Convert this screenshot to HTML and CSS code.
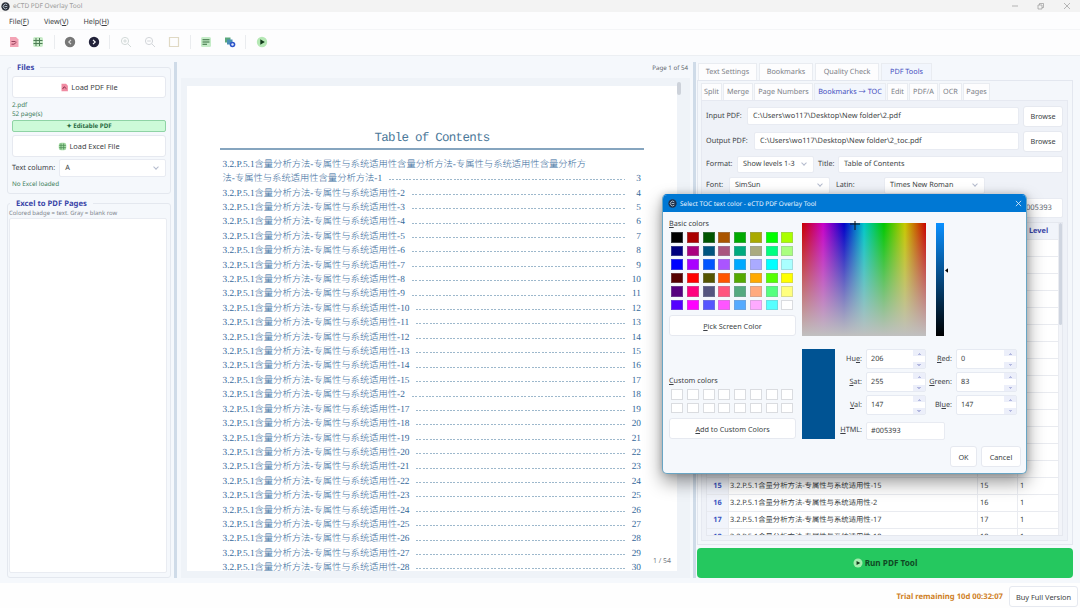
FILE: index.html
```html
<!DOCTYPE html>
<html lang="en">
<head>
    <meta charset="UTF-8">
    <meta name="viewport" content="width=device-width, initial-scale=1.0">
    <title>eCTD PDF Overlay Tool</title>
    <link rel="stylesheet" href="styles.css">
</head>
<body>
    <header class="titlebar">
        <svg class="app-icon" viewBox="0 0 10 10"><circle cx="5" cy="5" r="4.6" fill="#2b2f38"/><path d="M7 3.2A2.6 2.6 0 1 0 7 6.8M4 5h3" fill="none" stroke="#b9c4d0" stroke-width="1"/></svg>
        <span class="app-name">eCTD PDF Overlay Tool</span>
        <svg class="win-buttons" viewBox="0 0 66 12"><path d="M3 6h6M55 3l6 6M61 3l-6 6" stroke="#999" stroke-width=".7"/><path d="M29 5h4v4h-4zM30.500 5V3.500h4v4H33" fill="none" stroke="#999" stroke-width=".7"/></svg>
    </header>
    <nav class="menubar">
        <span>File(<u>F</u>)</span>
        <span>View(<u>V</u>)</span>
        <span>Help(<u>H</u>)</span>
    </nav>
    <div class="toolbar">
        <svg viewBox="0 0 12 12"><path d="M2 1h6l2.500 2.500V11H2z" fill="#f3a3b5"/><path d="M3.500 5.500h4M3.500 8.200h2.500l2.500-2" fill="none" stroke="#8b3450" stroke-width=".9"/></svg>
        <svg viewBox="0 0 12 12"><rect x="1" y="1" width="10" height="10" rx="2" fill="#c9ebc9"/><path d="M4 2v8M7.500 2v8M1.500 4.500h9M1.500 7.500h9" stroke="#4d7d55" stroke-width="1"/></svg>
        <i class="sep"></i>
        <svg viewBox="0 0 12 12"><circle cx="6" cy="6" r="5.200" fill="#777"/><path d="M7 3.800L4.800 6 7 8.200" fill="none" stroke="#ddd" stroke-width="1.200"/></svg>
        <svg viewBox="0 0 12 12"><circle cx="6" cy="6" r="5.200" fill="#23233a"/><path d="M5 3.800L7.200 6 5 8.200" fill="none" stroke="#fff" stroke-width="1.200"/></svg>
        <i class="sep"></i>
        <svg viewBox="0 0 12 12"><g fill="none" stroke="#d3dad9"><circle cx="5" cy="5" r="3.600"/><path d="M8 8l3 3M3.200 5h3.600M5 3.200v3.600"/></g></svg>
        <svg viewBox="0 0 12 12"><g fill="none" stroke="#d3d6da"><circle cx="5" cy="5" r="3.600"/><path d="M8 8l3 3M3.200 5h3.600"/></g></svg>
        <svg viewBox="0 0 12 12"><path d="M1.500 1.500h9v9h-9z" fill="none" stroke="#e0d9c4" stroke-width="1.200"/></svg>
        <i class="sep"></i>
        <svg viewBox="0 0 12 12"><rect x="1" y="1" width="10" height="10" rx="1.500" fill="#c5ecc8"/><path d="M2.500 3.800h7M2.500 6h7M2.500 8.200h4.500" stroke="#356b3d" stroke-width="1.100"/></svg>
        <svg viewBox="0 0 12 12"><path d="M1 1.500h5.500v5H1z" fill="#5aa87c"/><path d="M3 3.500h5.500v5H3z" fill="#4a8fb5"/><circle cx="8.500" cy="8.500" r="2.800" fill="#2d55c9"/><circle cx="8.500" cy="8.500" r="1.200" fill="#dfe8ff"/></svg>
        <i class="sep"></i>
        <svg viewBox="0 0 12 12"><circle cx="6" cy="6" r="5.200" fill="#b5e8b5"/><path d="M4.300 3.300L8.800 6 4.300 8.700z" fill="#123b1c"/></svg>
    </div>

    <main class="workspace">
        <aside class="sidebar">
            <fieldset class="group files">
                <legend>Files</legend>
                <button class="btn load"><svg viewBox="0 0 12 12"><path d="M2 1h6l2.500 2.500V11H2z" fill="#f08ba2"/><path d="M3.500 8l2-3 3 2.500" fill="none" stroke="#7b2440" stroke-width="1.100"/></svg>Load PDF File</button>
                <div class="note">2.pdf<br>52 page(s)</div>
                <div class="badge">✦ Editable PDF</div>
                <button class="btn load"><svg viewBox="0 0 12 12"><rect x="1" y="1" width="10" height="10" rx="3" fill="#a5dba5"/><path d="M4 2v8M7.500 2v8M1.500 4.500h9M1.500 7.500h9" stroke="#4d8d55" stroke-width="1"/></svg>Load Excel File</button>
                <div class="column-row"><label>Text column:</label><div class="field combo">A</div></div>
                <div class="note">No Excel loaded</div>
            </fieldset>
            <fieldset class="group excel">
                <legend>Excel to PDF Pages</legend>
                <div class="hint">Colored badge = text. Gray = blank row</div>
                <div class="list"></div>
            </fieldset>
        </aside>
        <div class="splitter"></div>

        <section class="viewer">
            <div class="page-label">Page 1 of 54</div>
            <div class="canvas">
                <div class="sheet">
                    <h1>Table of Contents</h1>
                    <div class="toc" id="toc">
                        <div class="toc-row"><span>3.2.P.5.1含量分析方法-专属性与系统适用性含量分析方法-专属性与系统适用性含量分析方</span></div>
                        <div class="toc-row"><span>法-专属性与系统适用性含量分析方法-1</span><i></i><b>3</b></div>
                    </div>
                    <div class="page-count">1 / 54</div>
                </div>
                <div class="thumb"></div>
            </div>
        </section>
        <div class="splitter"></div>

        <section class="tools">
            <div class="tabs">
                <span>Text Settings</span><span>Bookmarks</span><span>Quality Check</span><span class="active">PDF Tools</span>
            </div>
            <div class="pane">
                <div class="subtabs">
                    <span>Split</span><span>Merge</span><span>Page Numbers</span><span class="active">Bookmarks → TOC</span><span>Edit</span><span>PDF/A</span><span>OCR</span><span>Pages</span>
                </div>
                <div class="form">
                    <div class="row"><label class="w-input">Input PDF:</label><div class="field grow">C:\Users\wo117\Desktop\New folder\2.pdf</div><button class="btn browse">Browse</button></div>
                    <div class="row output"><label class="w-output">Output PDF:</label><div class="field grow">C:\Users\wo117\Desktop\New folder\2_toc.pdf</div><button class="btn browse">Browse</button></div>
                    <div class="row short"><label class="w-format">Format:</label><div class="field combo levels">Show levels 1-3</div><label class="w-title">Title:</label><div class="field grow">Table of Contents</div></div>
                    <div class="row short"><label class="w-font">Font:</label><div class="field combo font">SimSun</div><label class="w-latin">Latin:</label><div class="field combo font">Times New Roman</div></div>
                    <div class="row color"><div class="field hex">#005393</div></div>
                    <div class="table">
                        <div class="table-main" id="bookmarks">
                            <div class="tr head"><span></span><span>Title</span><span>Page</span><span>Level</span></div>
                        </div>
                        <div class="table-scroll"><div></div></div>
                    </div>
                </div>
            </div>
            <button class="run"><svg viewBox="0 0 12 12"><circle cx="6" cy="6" r="5.400" fill="#a4ecae"/><path d="M4.300 3.600L8.800 6 4.300 8.400z" fill="#123b1c"/></svg>Run PDF Tool</button>
        </section>
    </main>

    <footer class="statusbar">
        <span class="trial">Trial remaining 10d 00:32:07</span>
        <button class="btn buy">Buy Full Version</button>
    </footer>

    <div class="dialog">
        <div class="dialog-title">
            <svg class="app-icon" viewBox="0 0 10 10"><circle cx="5" cy="5" r="4.600" fill="#20304a"/><path d="M7 3.200A2.600 2.600 0 1 0 7 6.800M4 5h3" fill="none" stroke="#b9c4d0" stroke-width="1"/></svg>
            <span>Select TOC text color - eCTD PDF Overlay Tool</span>
            <svg class="close" viewBox="0 0 8 8"><path d="M1 1l6 6M7 1L1 7" stroke="#e8f4ff" stroke-width=".9"/></svg>
        </div>
        <div class="dialog-body">
            <div class="palette">
                <div class="caption"><u>B</u>asic colors</div>
                <div class="swatches" id="basic"></div>
                <button class="btn wide"><span><u>P</u>ick Screen Color</span></button>
                <div class="caption custom"><u>C</u>ustom colors</div>
                <div class="swatches" id="custom"></div>
                <button class="btn wide"><span><u>A</u>dd to Custom Colors</span></button>
            </div>
            <div class="picker">
                <div class="spectrum-row">
                    <div class="spectrum"><svg viewBox="0 0 12 12"><path d="M6 0v9M1 3h10" stroke="#111" stroke-width="1"/></svg></div>
                    <div class="value-bar"></div>
                    <svg class="arrow" viewBox="0 0 4 6"><path d="M4 0v6L0 3z"/></svg>
                </div>
                <div class="values">
                    <div class="preview"></div>
                    <div class="numbers">
                        <label>Hu<u>e</u>:</label><div class="spin">206<i></i></div>
                        <label><u>R</u>ed:</label><div class="spin">0<i></i></div>
                        <label><u>S</u>at:</label><div class="spin">255<i></i></div>
                        <label><u>G</u>reen:</label><div class="spin">83<i></i></div>
                        <label><u>V</u>al:</label><div class="spin">147<i></i></div>
                        <label>Bl<u>u</u>e:</label><div class="spin">147<i></i></div>
                        <label><u>H</u>TML:</label><div class="field html">#005393</div>
                    </div>
                </div>
                <div class="dialog-buttons"><button class="btn ok">OK</button><button class="btn cancel">Cancel</button></div>
            </div>
        </div>
    </div>

    <script src="script.js"></script>
</body>
</html>
```
FILE: styles.css
```css
* {
    box-sizing: border-box;
}

body {
    margin: 0;
    width: 1080px;
    height: 608px;
    overflow: hidden;
    display: flex;
    flex-direction: column;
    font-family: "Noto Sans", "Noto Sans CJK SC", sans-serif;
    font-size: 7.25px;
    line-height: 10px;
    color: #3c3f45;
    background: #f5f8fc;
    text-rendering: geometricPrecision;
    white-space: nowrap;
}

svg {
    display: block;
    flex: none;
}

u {
    text-underline-offset: 1px;
    text-decoration-thickness: 0.7px;
}

.titlebar {
    height: 12px;
    flex: none;
    display: flex;
    align-items: center;
    padding: 0 5px 0 1px;
    background: #f3f3f3;
    color: #9a9a9a;
    font-size: 6.5px;
}

.app-icon {
    width: 9px;
    height: 9px;
}

.app-name {
    margin-left: 3px;
}

.win-buttons {
    width: 66px;
    height: 12px;
    margin-left: auto;
}

.menubar {
    height: 18px;
    flex: none;
    display: flex;
    align-items: center;
    gap: 15px;
    padding: 2px 0 0 9px;
    background: #fdfdfe;
    border-bottom: 1px solid #f4f5f7;
}

.toolbar {
    height: 26px;
    flex: none;
    display: flex;
    align-items: center;
    gap: 12.4px;
    padding: 0 0 1px 8px;
    background: #fdfdfe;
    border-bottom: 1px solid #eceff3;
}

.toolbar svg {
    width: 12px;
    height: 12px;
}

.toolbar .sep {
    width: 1px;
    height: 14px;
    margin: 0 -3.2px;
    background: #eaecef;
}

/* Buttons and fields */
.btn {
    display: flex;
    align-items: center;
    justify-content: center;
    padding: 0;
    font: inherit;
    color: inherit;
    background: #fff;
    border: 1px solid #e6e9f0;
    border-radius: 3px;
}

.field {
    display: flex;
    align-items: center;
    height: 18px;
    padding: 0 5px;
    background: #fff;
    border: 1px solid #e8ebf2;
    border-radius: 2px;
}

.grow {
    flex: 1;
    font-size: 7.4px;
}

.combo::after {
    content: "";
    width: 3px;
    height: 3px;
    margin: -2px 2px 0 auto;
    border: solid #b4bbcd;
    border-width: 0 0.8px 0.8px 0;
    transform: rotate(45deg);
}

.workspace {
    height: 527px;
    flex: none;
    display: flex;
    padding: 6px 7px 5px;
}

.splitter {
    width: 3px;
    flex: none;
    background: #cfdbe8;
}

/* Left panel */
.sidebar {
    width: 164px;
    flex: none;
    margin-right: 3px;
    display: flex;
    flex-direction: column;
    gap: 4px;
}

.group {
    margin: 0;
    min-width: 0;
    border: 1px solid #e4e8ef;
    border-radius: 3px;
}

.group legend {
    height: 11px;
    padding: 1px 6px 0;
    margin-left: -1px;
    color: #3b46a8;
    font-size: 7.7px;
    font-weight: bold;
}

.files {
    height: 132px;
    padding: 3px 4px 0;
}

.excel legend {
    margin-left: 1px;
}

.load {
    width: 100%;
    height: 22px;
    gap: 2px;
    font-size: 7.4px;
}

.load svg {
    width: 9px;
    height: 9px;
}

.note {
    color: #3f7f5c;
    font-size: 6.3px;
    line-height: 8.5px;
}

.load + .note {
    padding: 3px 0 2px;
}

.badge {
    height: 12px;
    margin-bottom: 3px;
    border: 1px solid #8fd3a5;
    border-radius: 2px;
    background: #cdfad8;
    color: #26693f;
    font-size: 6.2px;
    font-weight: bold;
    text-align: center;
}

.column-row {
    display: flex;
    align-items: center;
    margin: 2px 0 3px;
}

.column-row .field {
    flex: 1;
    margin-left: 4px;
}

.excel {
    flex: 1;
    padding: 0 3px 1px 1px;
    display: flex;
    flex-direction: column;
}

.hint {
    height: 9px;
    font-size: 5.95px;
    line-height: 8px;
    color: #80858c;
}

.list {
    height: 355px;
    background: #fff;
    border: 1px solid #e9ecf2;
    border-radius: 2px;
}

/* PDF preview */
.viewer {
    width: 509px;
    flex: none;
    margin: 0 3px 0 4px;
    display: flex;
    flex-direction: column;
}

.page-label {
    height: 16px;
    padding-right: 2px;
    font-size: 6.2px;
    line-height: 11px;
    text-align: right;
    color: #62666c;
}

.canvas {
    flex: 1;
    display: flex;
    padding: 8px 8px 6px 6px;
    background: #eff3f8;
}

.sheet {
    width: 490px;
    height: 485px;
    padding: 42px 33px 0 33px;
    background: #fff;
    color: #35699a;
    overflow: hidden;
    position: relative;
}

.sheet h1 {
    height: 22px;
    margin: 0 0 7.8px;
    border-bottom: 2px solid #86a5bf;
    font: 12.5px/20px "Liberation Mono", monospace;
    letter-spacing: -0.75px;
    text-align: center;
    color: #4b7899;
}

.toc {
    padding: 0 3px 0 2.500px;
    font-family: "Liberation Serif", "Noto Sans CJK SC", serif;
    font-size: 9.3px;
    font-weight: 300;
}

.toc-row {
    height: 14.42px;
    line-height: 14.42px;
    display: flex;
    align-items: center;
}

.toc-row i {
    flex: 1;
    height: 1px;
    margin: 1px 11px 0 7px;
    background: repeating-linear-gradient(90deg, #9db8cc 0 2px, transparent 2px 3.4px);
}

.toc-row b {
    width: 5px;
    display: flex;
    justify-content: flex-end;
    font-weight: normal;
}

.page-count {
    position: absolute;
    right: 6px;
    bottom: 4px;
    font-size: 6.9px;
    color: #777d85;
}

.thumb {
    width: 4px;
    height: 13px;
    margin: -4px 0 0 0;
    border-radius: 2px;
    background: #cdd2da;
}

/* Right panel */
.tools {
    width: 376px;
    flex: none;
    margin-left: 1px;
    margin-top: 1px;
    display: flex;
    flex-direction: column;
}

.tabs {
    display: flex;
    gap: 2px;
    height: 17px;
    padding-left: 1px;
}

.tabs span,
.subtabs span {
    display: flex;
    align-items: center;
    justify-content: center;
    background: #fdfdfe;
    border: 1px solid #e9ecf1;
    border-bottom: 0;
    color: #7c8087;
}

.tabs span:nth-child(1) { width: 59px; }
.tabs span:nth-child(2) { width: 54px; }
.tabs span:nth-child(3) { width: 64px; }
.tabs span:nth-child(4) { width: 51px; }

.tabs .active,
.subtabs .active {
    background: #f2f6fd;
    color: #4650c0;
}

.pane {
    height: 465px;
    padding: 2px 4px 3px 3px;
    border: 1px solid #e3e7ef;
    background: #f4f7fb;
}

.subtabs {
    display: flex;
    gap: 1px;
    height: 17px;
}

.subtabs span:nth-child(1) { width: 21px; }
.subtabs span:nth-child(2) { width: 30px; }
.subtabs span:nth-child(3) { width: 59px; }
.subtabs span:nth-child(4) { width: 72px; }
.subtabs span:nth-child(5) { width: 21px; }
.subtabs span:nth-child(6) { width: 29px; }
.subtabs span:nth-child(7) { width: 23px; }
.subtabs span:nth-child(8) { width: 27px; }

.form {
    height: 441px;
    padding: 5px 4px 0;
    background: #eff2f8;
    border: 1px solid #e6e9f1;
}

.row {
    display: flex;
    align-items: center;
    height: 20px;
    margin-bottom: 5px;
}

.row.output {
    margin-bottom: 4.500px;
}

.row.short {
    height: 17px;
    margin-bottom: 4px;
}

.row.short .field {
    height: 17px;
}

.row.color {
    justify-content: flex-end;
    margin-bottom: 4px;
}

.w-input { width: 41px; }
.w-output { width: 48px; }
.w-format { width: 31px; }
.w-title { width: 20px; margin-left: 4px; }
.w-font { width: 23px; }
.w-latin { width: 48px; margin-left: 6px; }

.browse {
    width: 40px;
    height: 21px;
    margin-left: 4px;
}

.levels { width: 77px; }
.font { width: 101px; }

.hex {
    width: 48px;
    height: 20px;
    color: #5d6670;
    font-size: 7.6px;
}

.table {
    display: flex;
    height: 314px;
    overflow: hidden;
    background: #fff;
    border: 1px solid #e5e8ef;
}

.table-main {
    width: 352px;
}

.tr {
    display: grid;
    grid-template-columns: 22px 249px 40px 41px;
    height: 17px;
    font-size: 7.35px;
}

.tr span {
    padding-left: 1px;
    line-height: 16px;
    border-right: 1px solid #eaecf1;
    border-bottom: 1px solid #e9ebf0;
}

.tr span:nth-child(n+3) {
    padding-left: 2px;
}

.tr span:first-child {
    padding: 0;
    text-align: center;
    background: #f1f4fb;
    color: #3b55c0;
    font-weight: bold;
}

.tr.head span {
    padding-left: 11px;
    background: #f1f4fa;
    color: #3b46a8;
    font-weight: bold;
}

.table-scroll {
    flex: 1;
    background: #f2f4f9;
}

.table-scroll div {
    height: 102px;
    border-radius: 2px;
    background: #cfd5e0;
}

.run {
    display: flex;
    align-items: center;
    justify-content: center;
    gap: 2px;
    height: 30px;
    margin-top: 3px;
    padding-bottom: 2px;
    border: 0;
    border-radius: 4px;
    background: #25c85f;
    color: #0f4a24;
    font: bold 8.2px "Noto Sans", sans-serif;
}

.run svg {
    width: 10px;
    height: 10px;
}

.statusbar {
    flex: 1;
    display: flex;
    align-items: center;
    justify-content: flex-end;
    gap: 6px;
    padding: 2px 2px 0 0;
    background: #fefefe;
}

.trial {
    color: #cf7f25;
    font-size: 7.7px;
    font-weight: bold;
}

.buy {
    width: 69px;
    height: 21px;
    font-size: 7.4px;
}

/* Color dialog */
.dialog {
    position: absolute;
    left: 662px;
    top: 194px;
    width: 365px;
    height: 280px;
    border: 1px solid #68a5c4;
    border-top-color: #0078d4;
    border-radius: 5px;
    overflow: hidden;
    background: #f5f8fc;
    box-shadow: 0 8px 18px rgba(0, 0, 0, 0.42), 0 0 7px rgba(0, 0, 0, 0.18);
}

.dialog-title {
    display: flex;
    align-items: center;
    gap: 3px;
    height: 17px;
    padding: 0 4px 0 5px;
    background: #0078d4;
    color: #eaf5ff;
    font-size: 6.45px;
}

.close {
    width: 7px;
    height: 7px;
    margin-left: auto;
}

.dialog-body {
    display: flex;
    gap: 6px;
    padding: 6px 6px 0;
}

.palette {
    width: 127px;
}

.caption {
    height: 14px;
    padding-top: 0.5px;
}

.swatches {
    display: grid;
    grid-template-columns: repeat(8, 12px);
    grid-auto-rows: 10.5px;
    gap: 3px 3.75px;
    padding-left: 2px;
}

.swatches span {
    border: 1px solid rgba(150, 155, 165, 0.35);
}

.wide {
    width: 127px;
    height: 21px;
    margin-top: 5px;
}

.custom {
    margin-top: 39px;
}

.picker {
    flex: 1;
}

.spectrum-row {
    display: flex;
    align-items: center;
    height: 113px;
    margin-top: 5px;
}

.spectrum {
    width: 124px;
    height: 113px;
    background:
        linear-gradient(rgba(192, 192, 192, 0), #c0c0c0),
        linear-gradient(90deg, #c80000, #c800c8 17%, #0000c8 34%, #00c8c8 50%, #00c800 66%, #c8c800 83%, #c80000);
}

.spectrum svg {
    width: 12px;
    height: 12px;
    margin: -2px 0 0 47px;
}

.value-bar {
    width: 8px;
    height: 113px;
    margin-left: 10px;
    background: linear-gradient(#0a90ff, #000);
}

.arrow {
    width: 3px;
    height: 5px;
    margin: -18px 0 0 1px;
}

.values {
    display: flex;
    align-items: flex-start;
    height: 95px;
    margin-top: 12.5px;
}

.preview {
    width: 33px;
    height: 90px;
    background: #005393;
}

.numbers {
    display: grid;
    grid-template-columns: 27px 60px 22px 61px;
    grid-template-rows: 20px 20px 20px 23px;
    row-gap: 3.4px;
    column-gap: 4px;
    align-items: center;
}

.numbers label {
    justify-self: end;
}

.spin {
    display: flex;
    align-items: center;
    justify-content: space-between;
    height: 20px;
    padding-left: 4px;
    background: #fff;
    border: 1px solid #e6eaf2;
    border-radius: 2px;
}

.spin i {
    width: 12px;
    height: 18px;
    background:
        conic-gradient(from 135deg at 50% 0, #b4b9e0 25%, transparent 0) 50% 3px / 4px 2px no-repeat,
        conic-gradient(from -45deg at 50% 100%, #b4b9e0 25%, transparent 0) 50% 14px / 4px 2px no-repeat,
        linear-gradient(#eceffa 6px, #fff 6px 12px, #eceffa 12px);
}

.html {
    grid-column: 2 / 4;
    width: 79px;
    margin-top: 1px;
    padding-left: 4px;
}

.dialog-buttons {
    display: flex;
    gap: 4px;
    margin: 2.500px 0 0 148px;
}

.ok { width: 27px; height: 21px; }
.cancel { width: 40px; height: 21px; }
```
FILE: script.js
```js
const basicColors = [
    '#000000', '#aa0000', '#005500', '#aa5500', '#00aa00', '#aaaa00', '#00ff00', '#aaff00',
    '#00007f', '#aa007f', '#00557f', '#aa557f', '#00aa7f', '#aaaa7f', '#00ff7f', '#aaff7f',
    '#0000ff', '#aa00ff', '#0055ff', '#aa55ff', '#00aaff', '#aaaaff', '#00ffff', '#aaffff',
    '#550000', '#ff0000', '#555500', '#ff5500', '#55aa00', '#ffaa00', '#55ff00', '#ffff00',
    '#55007f', '#ff007f', '#55557f', '#ff557f', '#55aa7f', '#ffaa7f', '#55ff7f', '#ffff7f',
    '#5500ff', '#ff00ff', '#5555ff', '#ff55ff', '#55aaff', '#ffaaff', '#55ffff', '#ffffff'
];

function addSwatches(id, colors) {
    document.getElementById(id).innerHTML = colors
        .map(color => `<span style="background: ${color}"></span>`)
        .join('');
}

addSwatches('basic', basicColors);
addSwatches('custom', Array(16).fill('#ffffff'));

// Entry 16 is a repeat of the "-2" bookmark
function entryTitle(n) {
    return `3.2.P.5.1含量分析方法-专属性与系统适用性-${n === 16 ? 2 : n}`;
}

const toc = document.getElementById('toc');
for (let n = 2; n <= 28; n++) {
    toc.insertAdjacentHTML('beforeend',
        `<div class="toc-row"><span>${entryTitle(n)}</span><i></i><b>${n + 2}</b></div>`);
}

const bookmarks = document.getElementById('bookmarks');
for (let n = 1; n <= 18; n++) {
    bookmarks.insertAdjacentHTML('beforeend',
        `<div class="tr"><span>${n}</span><span>${entryTitle(n)}</span><span>${n}</span><span>1</span></div>`);
}
```
